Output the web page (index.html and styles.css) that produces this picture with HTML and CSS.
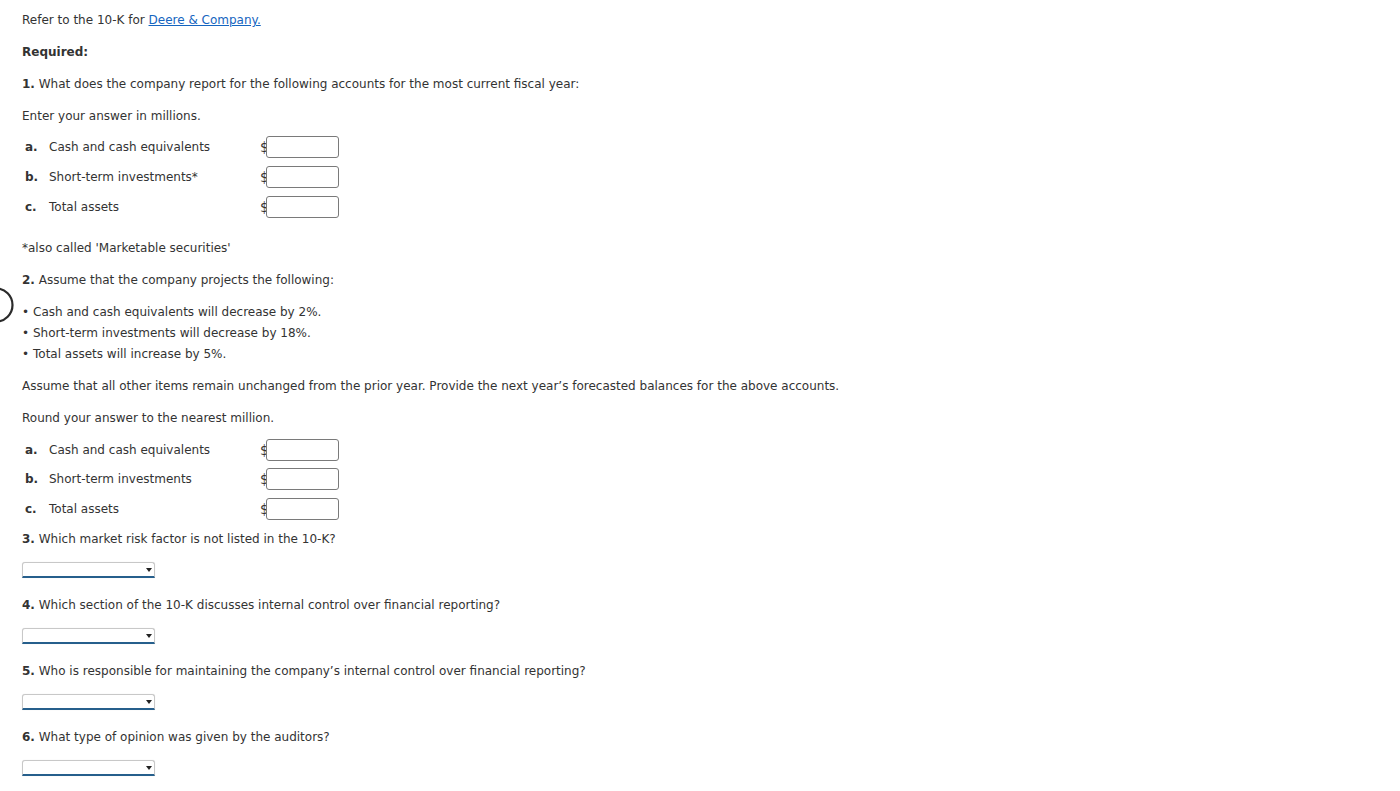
FILE: index.html
```html
<!DOCTYPE html>
<html>
<head>
<meta charset="utf-8">
<link rel="stylesheet" href="styles.css">
</head>
<body>
<svg class="ring" width="20" height="40" viewBox="0 0 20 40"><circle cx="-4" cy="19" r="16.5" fill="none" stroke="#2b2b2b" stroke-width="2.2"/></svg>
<div class="page">
  <p class="line">Refer to the 10-K for <a class="link" href="#">Deere &amp; Company.</a></p>
  <p class="line"><b>Required:</b></p>
  <p class="line"><b>1.</b> What does the company report for the following accounts for the most current fiscal year:</p>
  <p class="line">Enter your answer in millions.</p>
  <div class="rows rows1">
    <div class="row"><span class="mk">a.</span><span class="lbl">Cash and cash equivalents</span><span class="cur">$</span><span class="box"></span></div>
    <div class="row"><span class="mk">b.</span><span class="lbl">Short-term investments*</span><span class="cur">$</span><span class="box"></span></div>
    <div class="row"><span class="mk">c.</span><span class="lbl">Total assets</span><span class="cur">$</span><span class="box"></span></div>
  </div>
  <p class="line">*also called 'Marketable securities'</p>
  <p class="line"><b>2.</b> Assume that the company projects the following:</p>
  <ul class="bullets">
    <li>Cash and cash equivalents will decrease by 2%.</li>
    <li>Short-term investments will decrease by 18%.</li>
    <li>Total assets will increase by 5%.</li>
  </ul>
  <p class="line">Assume that all other items remain unchanged from the prior year. Provide the next year’s forecasted balances for the above accounts.</p>
  <p class="line">Round your answer to the nearest million.</p>
  <div class="rows rows2">
    <div class="row"><span class="mk">a.</span><span class="lbl">Cash and cash equivalents</span><span class="cur">$</span><span class="box"></span></div>
    <div class="row r2"><span class="mk">b.</span><span class="lbl">Short-term investments</span><span class="cur">$</span><span class="box"></span></div>
    <div class="row"><span class="mk">c.</span><span class="lbl">Total assets</span><span class="cur">$</span><span class="box"></span></div>
  </div>
  <p class="line q"><b>3.</b> Which market risk factor is not listed in the 10-K?</p>
  <div class="sel"><span class="arrow"></span></div>
  <p class="line q"><b>4.</b> Which section of the 10-K discusses internal control over financial reporting?</p>
  <div class="sel"><span class="arrow"></span></div>
  <p class="line q"><b>5.</b> Who is responsible for maintaining the company’s internal control over financial reporting?</p>
  <div class="sel"><span class="arrow"></span></div>
  <p class="line q"><b>6.</b> What type of opinion was given by the auditors?</p>
  <div class="sel"><span class="arrow"></span></div>
</div>
</body>
</html>
```

FILE: styles.css
```css
html, body {
  margin: 0;
  padding: 0;
  background: #fff;
}
body {
  font-family: "DejaVu Sans", Verdana, sans-serif;
  font-size: 12px;
  color: #333;
  position: relative;
}
.page {
  padding: 10px 22px 0 22px;
}
.line {
  margin: 0 0 11px 0;
  line-height: 21px;
}
.line b {
  font-weight: bold;
}
.link {
  color: #1565c0;
  text-decoration: underline;
}
.rows {
  display: flex;
  flex-direction: column;
}
.rows1 {
  margin: -6px 0 16px 0;
}
.rows2 {
  margin: -5px 0 5px 0;
}
.row {
  display: flex;
  align-items: center;
  height: 30px;
}
.rows2 .r2 {
  height: 29px;
  padding-bottom: 1px;
  box-sizing: border-box;
}
.mk {
  width: 27px;
  padding-left: 3px;
  box-sizing: border-box;
  font-weight: bold;
}
.lbl {
  width: 211px;
}
.cur {
  font-size: 13.5px;
  width: 6px;
  color: #333;
  letter-spacing: -1px;
}
.box {
  width: 71px;
  height: 20px;
  border: 1px solid #7a7a7a;
  border-radius: 3px;
  background: #fff;
}
.bullets {
  list-style: none;
  margin: 0 0 11px 0;
  padding: 0;
  line-height: 21px;
}
.bullets li::before {
  content: "•";
  display: inline-block;
  width: 11px;
}
.q {
  margin-bottom: 12px;
}
.sel {
  position: relative;
  width: 131px;
  height: 13px;
  border: 1px solid #c8c8c8;
  border-bottom: 2px solid #265f8c;
  border-radius: 3px 3px 0 0;
  background: #fff;
  margin: 0 0 17px 0;
  box-shadow: 0 0 1px rgba(0,0,0,0.15);
}
.arrow {
  position: absolute;
  right: 2px;
  top: 5px;
  width: 0;
  height: 0;
  border-left: 3.5px solid transparent;
  border-right: 3.5px solid transparent;
  border-top: 4px solid #222;
}
.ring {
  position: absolute;
  left: 0;
  top: 286px;
}
```
